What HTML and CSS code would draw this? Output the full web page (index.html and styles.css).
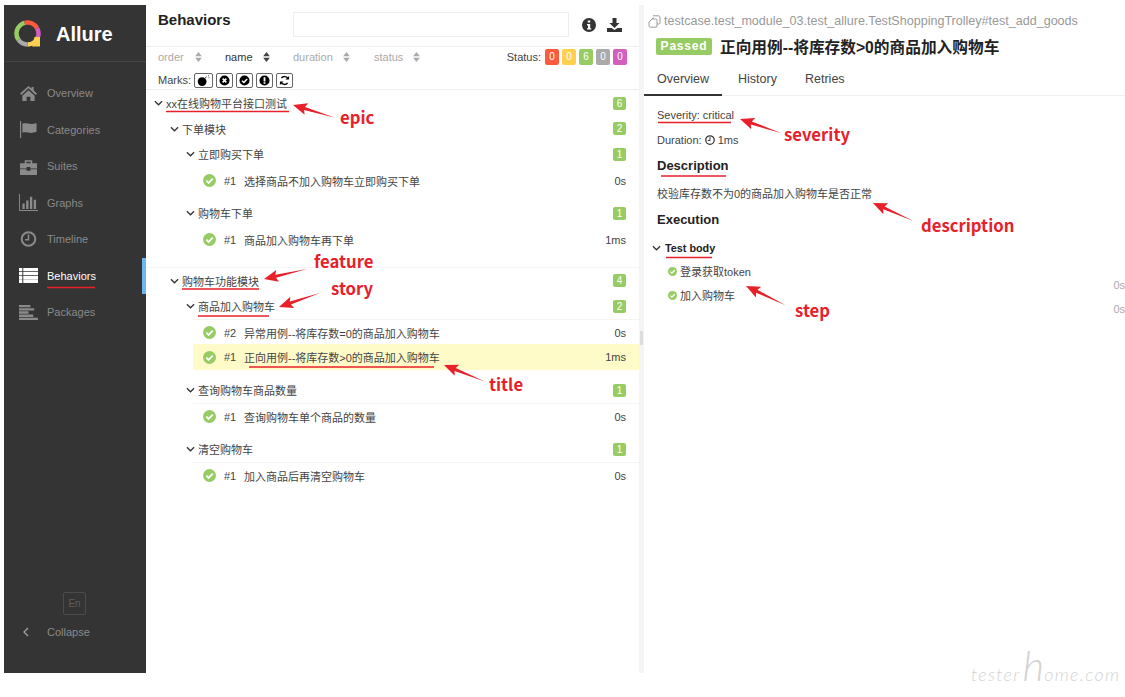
FILE: index.html
```html
<!DOCTYPE html>
<html lang="zh">
<head>
<meta charset="utf-8">
<title>Allure Behaviors</title>
<link rel="stylesheet" href="styles.css">
</head>
<body>
<svg class="defs" width="0" height="0" aria-hidden="true">
  <symbol id="i-check" viewBox="0 0 14 14"><circle cx="7" cy="7" r="7" fill="#97cc64"/><path d="M3.6 7.2 6 9.6 10.5 5" fill="none" stroke="#fff" stroke-width="2"/></symbol>
  <symbol id="i-chev" viewBox="0 0 10 6"><path d="M1 1 5 5 9 1" fill="none" stroke="#333" stroke-width="1.4"/></symbol>
  <symbol id="i-caret" viewBox="0 0 8 12"><path d="M4 0 8 5H0ZM4 12 0 7H8Z"/></symbol>
  <symbol id="i-home" viewBox="0 0 20 18"><path d="M10 1 1 9l1.500 1.500L10 3.500l7.500 7L19 9l-3.500-3.200V2h-2.300v1.700ZM3.500 11.500 10 5.500l6.500 6V17H12v-4.500H8V17H3.500Z"/></symbol>
  <symbol id="i-flag" viewBox="0 0 20 18"><path d="M1 0h1.200v18H1ZM3.500 3C8 1 11 5 18.500 2v9.500C11 14.500 8 10.500 3.500 12.500Z"/></symbol>
  <symbol id="i-suit" viewBox="0 0 20 18"><path d="M1 5.500h18v5.500h-7V9.500H8V11H1ZM1 12h7v1.500h4V12h7v6H1ZM6 5.500V2.500h8v3h-1.800V4H7.800v1.500Z"/></symbol>
  <symbol id="i-bars" viewBox="0 0 20 18"><path d="M0 0h1v17h19v1H0ZM3.500 10h2.500v6H3.500ZM7.500 7h2.500v9H7.500ZM11.500 3h2.500v13h-2.500ZM15.500 6H18v10h-2.500Z"/></symbol>
  <symbol id="i-clock" viewBox="0 0 16 16"><circle cx="8" cy="8" r="6.800" fill="none" stroke="currentColor" stroke-width="2"/><path d="M8 3.500V8.800H4.500" fill="none" stroke="currentColor" stroke-width="1.600"/></symbol>
  <symbol id="i-list" viewBox="0 0 20 16"><path d="M0 0h3.500v3.500H0ZM4.500 0H20v3.500H4.500ZM0 4.300h3.500v3.500H0ZM4.500 4.300H20v3.500H4.500ZM0 8.600h3.500v3.500H0ZM4.500 8.600H20v3.500H4.500ZM0 12.500h3.500V16H0ZM4.500 12.500H20V16H4.500Z"/></symbol>
  <symbol id="i-pack" viewBox="0 0 20 16"><path d="M0 0h12v2.600H0ZM0 3.400h16v2.600H0ZM0 6.800h10v2.600H0ZM0 10.100h15v2.600H0ZM0 13.400h20V16H0Z"/></symbol>
  <symbol id="i-bomb" viewBox="0 0 14 12"><circle cx="5.500" cy="7.200" r="4.800"/><path d="M8.500 3.500 10.500 1.800M12 1l1-.5M12.500 3h1" stroke="#000" fill="none" stroke-width=".8"/></symbol>
  <symbol id="i-x" viewBox="0 0 12 12"><circle cx="6" cy="6" r="5.500"/><path d="M4 4 8 8M8 4 4 8" stroke="#fff" stroke-width="1.700"/></symbol>
  <symbol id="i-ok" viewBox="0 0 12 12"><circle cx="6" cy="6" r="5.500"/><path d="M3.300 6.200 5.300 8.200 8.900 4.300" fill="none" stroke="#fff" stroke-width="1.600"/></symbol>
  <symbol id="i-ex" viewBox="0 0 12 12"><circle cx="6" cy="6" r="5.500"/><path d="M5 2.500h2V7H5ZM5 7.900h2v1.700H5Z" fill="#fff"/></symbol>
  <symbol id="i-re" viewBox="0 0 12 12"><path d="M10 4.200A4.300 4.300 0 0 0 2.600 3.500M2 7.800A4.300 4.300 0 0 0 9.400 8.500" fill="none" stroke="#000" stroke-width="1.500"/><path d="M11 1v4H7ZM1 11V7h4Z"/></symbol>
  <symbol id="i-info" viewBox="0 0 14 14"><circle cx="7" cy="7" r="7"/><path d="M5.800 2.500h2.400v2H5.800ZM5 6h3.200v4.200h1v1.400H5v-1.400h1V7.400H5Z" fill="#fff"/></symbol>
  <symbol id="i-down" viewBox="0 0 15 14"><path d="M5.500 0h4v5h3L7.500 10 2.500 5h3ZM0 10h4.500l3 2 3-2H15v4H0Z"/></symbol>
  <symbol id="i-copy" viewBox="0 0 13 13"><path d="M5 .8h5.500a1.500 1.500 0 0 1 1.500 1.500V7.500a1.500 1.500 0 0 1-1.500 1.500H9M5 4V2.300" fill="none" stroke="#999" stroke-width="1"/><path d="M4 4h3.500A1.500 1.500 0 0 1 9 5.500v5.700a1 1 0 0 1-1 1H2.500A1.500 1.500 0 0 1 1 10.700V7Z" fill="none" stroke="#999" stroke-width="1"/></symbol>
</svg>

<div class="app">
  <aside class="side">
    <div class="brand">
      <svg class="logo" viewBox="0 0 28 28" aria-hidden="true">
        <g fill="none" stroke-width="4.500">
          <circle cx="13.500" cy="13.500" r="11" pathLength="360" stroke="#97cc64" stroke-dasharray="110 360" transform="rotate(145 13.500 13.500)"/>
          <circle cx="13.500" cy="13.500" r="11" pathLength="360" stroke="#fd5a3e" stroke-dasharray="75 360" transform="rotate(255 13.500 13.500)"/>
          <circle cx="13.500" cy="13.500" r="11" pathLength="360" stroke="#d35ebe" stroke-dasharray="50 360" transform="rotate(330 13.500 13.500)"/>
          <circle cx="13.500" cy="13.500" r="11" pathLength="360" stroke="#ffd050" stroke-dasharray="70 360" transform="rotate(20 13.500 13.500)"/>
          <circle cx="13.500" cy="13.500" r="11" pathLength="360" stroke="#aaa" stroke-dasharray="55 360" transform="rotate(90 13.500 13.500)"/>
        </g>
        <path d="M20.500 17h5.500v9.500h-8Z" fill="#ffd050"/>
      </svg>
      <span class="brand-name">Allure</span>
    </div>
    <nav class="menu">
      <a class="menu-item"><svg class="menu-ico"><use href="#i-home"/></svg><span>Overview</span></a>
      <a class="menu-item"><svg class="menu-ico"><use href="#i-flag"/></svg><span>Categories</span></a>
      <a class="menu-item"><svg class="menu-ico"><use href="#i-suit"/></svg><span>Suites</span></a>
      <a class="menu-item"><svg class="menu-ico"><use href="#i-bars"/></svg><span>Graphs</span></a>
      <a class="menu-item"><svg class="menu-ico menu-ico-clock"><use href="#i-clock"/></svg><span>Timeline</span></a>
      <a class="menu-item menu-item-active"><svg class="menu-ico"><use href="#i-list"/></svg><span>Behaviors</span></a>
      <a class="menu-item"><svg class="menu-ico"><use href="#i-pack"/></svg><span>Packages</span></a>
    </nav>
    <div class="side-foot">
      <div class="lang">En</div>
      <div class="collapse"><svg class="collapse-ico" viewBox="0 0 6 10"><path d="M5 1 1 5l4 4" fill="none" stroke="#999" stroke-width="1.500"/></svg><span>Collapse</span></div>
    </div>
  </aside>

  <main class="list-pane">
    <header class="list-head">
      <h2 class="list-title">Behaviors</h2>
      <div class="search"></div>
      <svg class="head-ico head-info"><use href="#i-info"/></svg>
      <svg class="head-ico head-down"><use href="#i-down"/></svg>
    </header>
    <div class="sort-row">
      <div class="sort sort-a">order<svg class="caret"><use href="#i-caret"/></svg></div>
      <div class="sort sort-b sort-on">name<svg class="caret"><use href="#i-caret"/></svg></div>
      <div class="sort sort-c">duration<svg class="caret"><use href="#i-caret"/></svg></div>
      <div class="sort sort-d">status<svg class="caret"><use href="#i-caret"/></svg></div>
      <div class="status">
        <span class="status-label">Status:</span>
        <span class="pill pill-red">0</span><span class="pill pill-yellow">0</span><span class="pill pill-green">6</span><span class="pill pill-gray">0</span><span class="pill pill-purple">0</span>
      </div>
    </div>
    <div class="marks">
      <span class="marks-label">Marks:</span>
      <span class="mark mark-wide"><svg class="mark-ico-wide"><use href="#i-bomb"/></svg></span>
      <span class="mark"><svg class="mark-ico"><use href="#i-x"/></svg></span>
      <span class="mark"><svg class="mark-ico"><use href="#i-ok"/></svg></span>
      <span class="mark"><svg class="mark-ico"><use href="#i-ex"/></svg></span>
      <span class="mark"><svg class="mark-ico"><use href="#i-re"/></svg></span>
    </div>
    <section class="tree">
      <div class="node n1"><svg class="chev"><use href="#i-chev"/></svg><span class="node-name">xx在线购物平台接口测试</span><b class="count">6</b></div>
      <div class="node n2 h25"><svg class="chev"><use href="#i-chev"/></svg><span class="node-name">下单模块</span><b class="count">2</b></div>
      <div class="node n3"><svg class="chev"><use href="#i-chev"/></svg><span class="node-name">立即购买下单</span><b class="count">1</b></div>
      <div class="leaf h27"><svg class="ok"><use href="#i-check"/></svg><span class="num">#1</span><span class="leaf-name">选择商品不加入购物车立即购买下单</span><span class="time">0s</span></div>
      <div class="node n3 gap6"><svg class="chev"><use href="#i-chev"/></svg><span class="node-name">购物车下单</span><b class="count">1</b></div>
      <div class="leaf h27"><svg class="ok"><use href="#i-check"/></svg><span class="num">#1</span><span class="leaf-name">商品加入购物车再下单</span><span class="time">1ms</span></div>
      <div class="node n2 gap14 rule"><svg class="chev"><use href="#i-chev"/></svg><span class="node-name">购物车功能模块</span><b class="count">4</b></div>
      <div class="node n3"><svg class="chev"><use href="#i-chev"/></svg><span class="node-name">商品加入购物车</span><b class="count">2</b></div>
      <div class="leaf rule-top"><svg class="ok"><use href="#i-check"/></svg><span class="num">#2</span><span class="leaf-name">异常用例--将库存数=0的商品加入购物车</span><span class="time">0s</span></div>
      <div class="leaf leaf-on"><svg class="ok"><use href="#i-check"/></svg><span class="num">#1</span><span class="leaf-name">正向用例--将库存数&gt;0的商品加入购物车</span><span class="time">1ms</span></div>
      <div class="node n3 gap7"><svg class="chev"><use href="#i-chev"/></svg><span class="node-name">查询购物车商品数量</span><b class="count">1</b></div>
      <div class="leaf rule-top"><svg class="ok"><use href="#i-check"/></svg><span class="num">#1</span><span class="leaf-name">查询购物车单个商品的数量</span><span class="time">0s</span></div>
      <div class="node n3 gap7"><svg class="chev"><use href="#i-chev"/></svg><span class="node-name">清空购物车</span><b class="count">1</b></div>
      <div class="leaf rule-top"><svg class="ok"><use href="#i-check"/></svg><span class="num">#1</span><span class="leaf-name">加入商品后再清空购物车</span><span class="time">0s</span></div>
    </section>
  </main>

  <div class="splitter"><span class="grip"></span></div>

  <section class="detail">
    <div class="path"><svg class="copy"><use href="#i-copy"/></svg><span>testcase.test_module_03.test_allure.TestShoppingTrolley#test_add_goods</span></div>
    <div class="heading"><span class="passed">Passed</span><h1 class="case-title">正向用例--将库存数&gt;0的商品加入购物车</h1></div>
    <div class="tabs">
      <span class="tab tab-on">Overview</span>
      <span class="tab">History</span>
      <span class="tab">Retries</span>
    </div>
    <div class="body">
      <p class="meta meta-sev">Severity: critical</p>
      <p class="meta meta-dur">Duration: <svg class="dur-ico"><use href="#i-clock"/></svg> 1ms</p>
      <h3 class="sec sec-desc">Description</h3>
      <p class="desc">校验库存数不为0的商品加入购物车是否正常</p>
      <h3 class="sec sec-exec">Execution</h3>
      <div class="stage"><svg class="chev stage-chev"><use href="#i-chev"/></svg><b>Test body</b></div>
      <div class="step"><svg class="step-ok"><use href="#i-check"/></svg><span>登录获取token</span></div>
      <div class="step"><svg class="step-ok"><use href="#i-check"/></svg><span>加入购物车</span></div>
    </div>
    <span class="step-time step-time-a">0s</span>
    <span class="step-time step-time-b">0s</span>
  </section>
</div>

<svg class="marks-layer" viewBox="0 0 1125 697" aria-hidden="true">
  <defs><polygon id="arrow" points="0,0 14,-6 12,-1.600 44,0 12,1.600 14,6"/></defs>
  <g fill="#e8202a">
    <use href="#arrow" transform="translate(293 105) rotate(17)"/>
    <use href="#arrow" transform="translate(264 279) rotate(-13)"/>
    <use href="#arrow" transform="translate(279 307) rotate(-19)"/>
    <use href="#arrow" transform="translate(444 365) rotate(22)"/>
    <use href="#arrow" transform="translate(740 119) rotate(19)"/>
    <use href="#arrow" transform="translate(873 203) rotate(24)"/>
    <use href="#arrow" transform="translate(746 286) rotate(26)"/>
  </g>
  <g stroke="#e8202a" stroke-width="1.600" fill="none">
    <path d="M47 287.500H95M166 111.500H289M182 289H259M198 316H269M249 367H434M658 122.500H731M661 176H726M666 257.500H712"/>
  </g>
</svg>
<span class="tag tag-epic">epic</span>
<span class="tag tag-feature">feature</span>
<span class="tag tag-story">story</span>
<span class="tag tag-title">title</span>
<span class="tag tag-severity">severity</span>
<span class="tag tag-description">description</span>
<span class="tag tag-step">step</span>
<div class="watermark">tester<span class="wm-h">h</span>ome.com</div>
</body>
</html>
```
FILE: styles.css
```css
* { box-sizing: border-box; }
html, body { margin: 0; height: 100%; }
body {
  background: #fff;
  font-family: "Liberation Sans", "Noto Sans CJK SC", sans-serif;
  font-size: 11px;
  color: #444;
  overflow: hidden;
  position: relative;
  width: 1125px;
  height: 697px;
}
.defs { position: absolute; }
svg { display: block; }
h1, h2, h3, p { margin: 0; }

.app {
  display: flex;
  height: 674px;
  margin-left: 4px;
  padding-top: 5px;
  border-top: 1px solid #f0f0f0;
  margin-top: -1px;
}

/* sidebar */
.side {
  width: 142px;
  flex: none;
  background: #343434;
  color: #8a8a8a;
  display: flex;
  flex-direction: column;
}
.brand {
  height: 57px;
  display: flex;
  align-items: center;
  border-bottom: 1px solid #454545;
  padding: 2px 0 0 10px;
}
.logo { width: 28px; height: 28px; flex: none; }
.brand-name { font-size: 20px; font-weight: 700; color: #fff; margin-left: 14px; }
.menu { padding-top: 13px; }
.menu-item {
  height: 36.5px;
  display: flex;
  align-items: center;
  padding-left: 15px;
  gap: 9px;
}
.menu-ico { width: 19px; height: 17px; fill: #8a8a8a; color: #8a8a8a; flex: none; }
.menu-ico-clock { width: 19px; height: 16px; }
.menu-item-active { color: #fff; border-right: 4px solid #6db7ec; }
.menu-item-active .menu-ico { fill: #fff; }
.side-foot { margin-top: auto; padding-bottom: 35px; }
.lang {
  width: 23px;
  height: 23px;
  margin-left: 59px;
  border: 1px solid #4b4b4b;
  border-radius: 2px;
  color: #5c5c5c;
  font-size: 10px;
  display: flex;
  align-items: center;
  justify-content: center;
}
.collapse { display: flex; align-items: center; padding: 11px 0 0 19px; gap: 18px; }
.collapse-ico { width: 6px; height: 10px; }

/* list pane */
.list-pane { width: 493px; flex: none; }
.list-head {
  height: 41px;
  display: flex;
  align-items: flex-start;
  padding: 6px 0 0 12px;
}
.list-title { font-size: 15px; font-weight: 700; color: #222; width: 135px; line-height: 18px; }
.search { width: 276px; height: 25px; border: 1px solid #eee; margin-top: 1px; }
.head-ico { fill: #333; flex: none; margin-top: 7px; }
.head-info { width: 14px; height: 14px; margin-left: 13px; }
.head-down { width: 15px; height: 14px; margin-left: 11px; }
.sort-row {
  height: 22px;
  border-top: 1px solid #eee;
  background: #fff;
  display: flex;
  align-items: center;
  padding: 0 12px 2px;
  color: #aaa;
}
.sort { display: flex; align-items: center; flex: none; }
.sort-a { width: 67px; gap: 11px; }
.sort-b { width: 68px; gap: 10px; color: #333; }
.sort-c { width: 81px; gap: 10px; }
.sort-d { gap: 10px; }
.caret { width: 7px; height: 10px; fill: #aaa; }
.sort-on .caret { fill: #444; }
.status { margin-left: auto; display: flex; align-items: center; gap: 3px; color: #444; }
.status-label { margin-right: 1px; }
.pill {
  width: 14px;
  height: 16px;
  border-radius: 2px;
  color: #fff;
  font-size: 10px;
  display: flex;
  align-items: center;
  justify-content: center;
}
.pill-red { background: #fd5a3e; }
.pill-yellow { background: #ffd050; }
.pill-green { background: #97cc64; }
.pill-gray { background: #aaa; }
.pill-purple { background: #d35ebe; }
.marks {
  height: 22px;
  display: flex;
  align-items: flex-start;
  gap: 3px;
  padding: 5px 0 0 12px;
  border-bottom: 1px solid #eee;
  color: #444;
}
.marks-label { width: 33px; line-height: 14px; }
.mark {
  width: 17px;
  height: 15px;
  border: 1px solid #666;
  border-radius: 2px;
  display: flex;
  align-items: center;
  justify-content: center;
}
.mark-wide { width: 19px; }
.mark-ico { width: 11px; height: 11px; }
.mark-ico-wide { width: 13px; height: 11px; }

.node {
  height: 26px;
  display: flex;
  align-items: center;
  padding-right: 13px;
}
.h25 { height: 25px; }
.n1 { padding-left: 8px; }
.n2 { padding-left: 24px; }
.n3 { padding-left: 40px; }
.chev { width: 9px; height: 6px; flex: none; margin-right: 3px; }
.node-name { color: #444; }
.count {
  margin-left: auto;
  width: 13px;
  height: 13px;
  border-radius: 2px;
  background: #97cc64;
  color: #fff;
  font-size: 10px;
  font-weight: 400;
  display: flex;
  align-items: center;
  justify-content: center;
}
.gap6 { margin-top: 6px; }
.gap7 { margin-top: 7px; }
.gap14 { margin-top: 14px; }
.rule { border-top: 1px solid #f4f4f4; }
.leaf {
  height: 26px;
  display: flex;
  align-items: center;
  margin-left: 47px;
  padding: 0 13px 0 10px;
}
.h27 { height: 27px; }
.rule-top { border-top: 1px solid #f4f4f4; }
.leaf-on { background: #fffbc9; margin-top: -1px; }
.ok { width: 13px; height: 13px; flex: none; }
.num { width: 20px; margin-left: 8px; flex: none; color: #444; }
.leaf-name { color: #444; }
.time { margin-left: auto; color: #444; }

.splitter {
  width: 5px;
  flex: none;
  background: #f4f4f4;
  display: flex;
  align-items: center;
  justify-content: center;
  padding-bottom: 2px;
}
.grip { width: 3px; height: 14px; background: #ddd; }

/* detail */
.detail { flex: 1; position: relative; min-width: 0; }
.path {
  display: flex;
  align-items: center;
  gap: 3px;
  height: 20px;
  margin-top: 6px;
  padding-left: 4px;
  font-size: 12.560px;
  color: #999;
  white-space: nowrap;
}
.copy { width: 13px; height: 13px; flex: none; }
.heading { display: flex; align-items: center; height: 24px; padding-left: 12px; margin-top: 3px; }
.passed {
  width: 56px;
  height: 17px;
  background: #97cc64;
  border-radius: 2px;
  color: #fff;
  font-size: 12px;
  font-weight: 700;
  letter-spacing: .8px;
  display: flex;
  align-items: center;
  justify-content: center;
}
.case-title { font-size: 15.700px; font-weight: 700; color: #222; margin-left: 8px; white-space: nowrap; }
.tabs {
  height: 32px;
  display: flex;
  border-bottom: 1px solid #f0f0f0;
  margin-top: 6px;
}
.tab { font-size: 12.500px; padding: 8px 0 0; color: #444; }
.tab-on { width: 78px; padding-left: 13px; border-bottom: 2px solid #333; height: 32px; }
.tab:nth-child(2) { width: 83px; padding-left: 16px; }
.body { padding: 11px 0 0 13px; }
.meta { line-height: 16px; }
.meta-dur { margin-top: 9px; display: flex; align-items: center; gap: 3px; }
.dur-ico { width: 10px; height: 10px; color: #333; }
.sec { font-size: 13px; font-weight: 700; color: #222; line-height: 16px; }
.sec-desc { margin-top: 10px; }
.desc { font-size: 11px; line-height: 16px; margin-top: 12px; }
.sec-exec { margin-top: 10px; }
.stage { display: flex; align-items: center; margin: 12px 0 0 -5px; color: #222; height: 16px; font-size: 10.800px; }
.stage-chev { margin-right: 4px; }
.step { display: flex; align-items: center; gap: 3px; height: 24px; padding-left: 11px; }
.stage + .step { margin-top: 3px; }
.step-ok { width: 9px; height: 9px; flex: none; }
.step-time { position: absolute; right: 0; color: #aaa; line-height: 14px; }
.step-time-a { top: 273px; }
.step-time-b { top: 297px; }

/* annotations laid over the screenshot */
.marks-layer { position: absolute; left: 0; top: 0; width: 1125px; height: 697px; pointer-events: none; }
.tag {
  position: absolute;
  font-family: "Noto Sans CJK SC", sans-serif;
  font-size: 16.700px;
  font-weight: 700;
  line-height: 20px;
  color: #e8202a;
  white-space: nowrap;
}
.tag-epic { left: 340px; top: 107px; }
.tag-feature { left: 314px; top: 251px; }
.tag-story { left: 331px; top: 278px; }
.tag-title { left: 489px; top: 374px; }
.tag-severity { left: 784px; top: 124px; }
.tag-description { left: 921px; top: 215px; }
.tag-step { left: 795px; top: 300px; }

.watermark {
  position: absolute;
  left: 971px;
  top: 662px;
  font-family: "Lato", sans-serif;
  font-style: italic;
  font-weight: 300;
  font-size: 18px;
  line-height: 24px;
  letter-spacing: 1.300px;
  color: #d4d4d4;
  white-space: nowrap;
}
.wm-h { font-size: 42px; line-height: 0; font-weight: 300; letter-spacing: 0; margin-left: 2px; }
```
